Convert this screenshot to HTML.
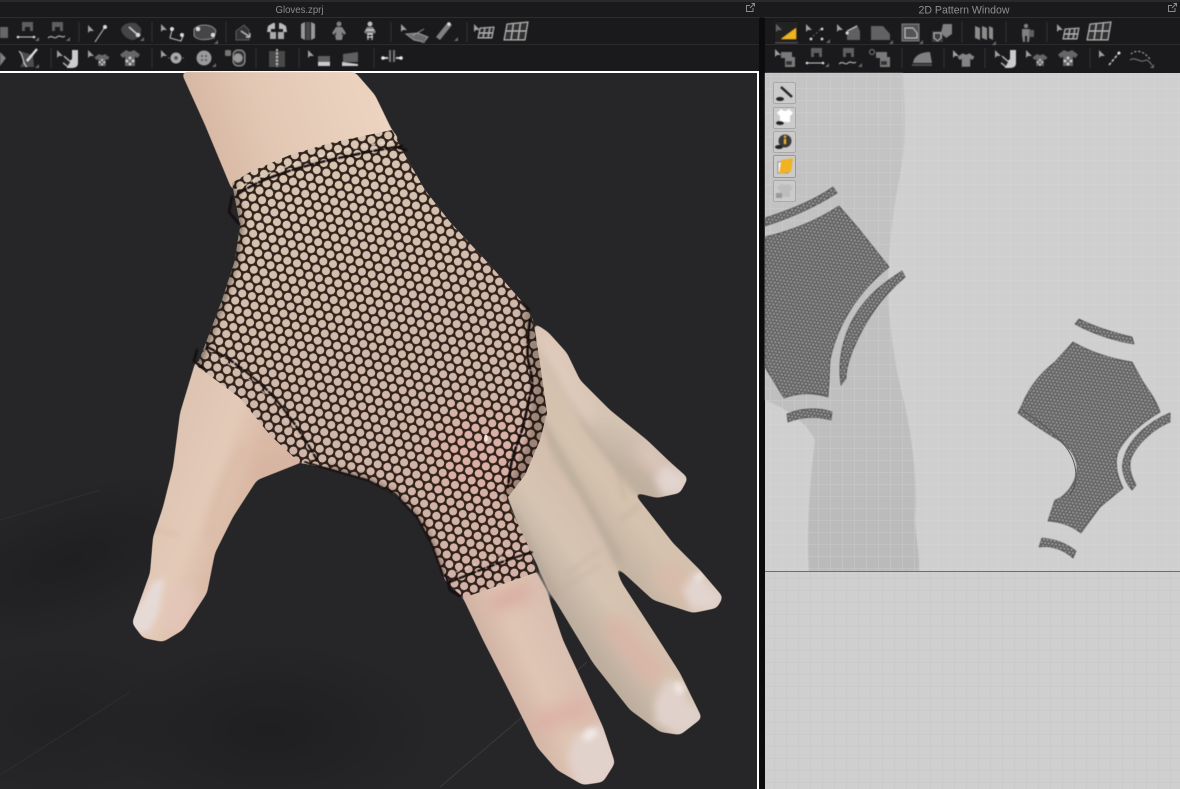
<!DOCTYPE html>
<html><head><meta charset="utf-8"><style>
html,body{margin:0;padding:0;background:#1a1a1c;width:1180px;height:789px;overflow:hidden}
svg{display:block}
text{font-family:"Liberation Sans",sans-serif}
</style></head><body>
<svg width="1180" height="789" viewBox="0 0 1180 789" xmlns="http://www.w3.org/2000/svg">
<defs>
<pattern id="net" width="10" height="17.32" patternUnits="userSpaceOnUse" patternTransform="rotate(15)">
<path fill-rule="evenodd" fill="#33241c" d="M0 0H10V17.32H0Z M.95 4.33a4.05 4.05 0 1 0 8.1 0a4.05 4.05 0 1 0-8.1 0Z M-4.05 12.99a4.05 4.05 0 1 0 8.1 0a4.05 4.05 0 1 0-8.1 0Z M5.95 12.99a4.05 4.05 0 1 0 8.1 0a4.05 4.05 0 1 0-8.1 0Z"/>
</pattern>
<pattern id="pm" width="3.6" height="6.2" patternUnits="userSpaceOnUse" patternTransform="rotate(8)">
<rect width="3.6" height="6.2" fill="#565656"/><circle cx="1.8" cy="1.55" r="1.15" fill="#9a9a9a"/><circle cx="0" cy="4.65" r="1.15" fill="#9a9a9a"/><circle cx="3.6" cy="4.65" r="1.15" fill="#9a9a9a"/>
</pattern>
<pattern id="grid" width="12" height="12" patternUnits="userSpaceOnUse" x="2" y="4">
<path d="M0 0V12M0 0H12" stroke="#dcdcdc" stroke-width="1" fill="none" opacity=".45"/>
</pattern>
<pattern id="grid2" width="12" height="12" patternUnits="userSpaceOnUse" x="6" y="2">
<path d="M0 0V12M0 0H12" stroke="#bcbcbc" stroke-width="1" fill="none" opacity=".6"/>
</pattern>
<filter id="sm" filterUnits="userSpaceOnUse" x="0" y="0" width="1180" height="789">
<feGaussianBlur stdDeviation="3"/>
<feComponentTransfer><feFuncA type="linear" slope="7" intercept="-3"/></feComponentTransfer>
</filter>
<filter id="b3" filterUnits="userSpaceOnUse" x="0" y="0" width="1180" height="789"><feGaussianBlur stdDeviation="3"/></filter>
<filter id="b6" filterUnits="userSpaceOnUse" x="0" y="0" width="1180" height="789"><feGaussianBlur stdDeviation="7"/></filter>
<filter id="b12" filterUnits="userSpaceOnUse" x="0" y="0" width="1180" height="789"><feGaussianBlur stdDeviation="14"/></filter>
<filter id="b05" filterUnits="userSpaceOnUse" x="0" y="0" width="1180" height="789"><feGaussianBlur stdDeviation=".45"/></filter>
<filter id="b02" filterUnits="userSpaceOnUse" x="0" y="0" width="1180" height="789"><feGaussianBlur stdDeviation=".25"/></filter>

<clipPath id="cf4"><path id="f4" d="M533 322L548 332L567 353L580 380L610 410L647 440L670 462L688 478L680 493L657 498L633 492L613 470L575 420L545 380Z"/></clipPath>
<clipPath id="cf3"><path id="f3" d="M535 340L560 380L583 427L613 467L637 497L673 543L700 570L723 597L717 608L693 613L653 600L617 567L590 530L540 450Z"/></clipPath>
<clipPath id="cf2"><path id="f2" d="M540 420L553 460L580 497L603 540L622 583L657 637L680 673L702 718L680 735L660 732L630 710L593 663L553 597L520 530L505 490Z"/></clipPath>
<clipPath id="cf1"><path id="f1" d="M455 590L535 570L547 593L563 640L583 683L603 727L615 763L603 782L583 785L557 770L537 747L507 687L483 640L463 598Z"/></clipPath>
<clipPath id="cth"><path id="th" d="M196 360L180 413L173 467L163 507L153 537L150 573L132 623L143 638L163 642L183 630L207 593L215 553L233 517L257 480L300 463L320 450L250 380Z"/></clipPath>
<clipPath id="car"><path id="ar" d="M181 72L205 125L232 190L400 140L392 130L375 95L355 72Z"/></clipPath>
<clipPath id="cgl"><path id="gl" d="M232 183L250 172L290 155L330 143L392 130L402 150L425 190L450 222L490 265L525 305L533 320L540 363L547 413L540 440L525 475L508 497L510 507L530 550L537 572L463 598L445 580L432 545L417 517L395 495L367 480L327 468L300 463L270 435L240 398L197 366L205 345L222 300L235 260L240 225Z"/></clipPath>

<linearGradient id="gGlove" gradientUnits="userSpaceOnUse" x1="300" y1="150" x2="470" y2="560">
<stop offset="0" stop-color="#d8c6b2"/><stop offset=".5" stop-color="#cfb8aa"/><stop offset="1" stop-color="#d2b2a6"/>
</linearGradient>
<linearGradient id="gF1" gradientUnits="userSpaceOnUse" x1="505" y1="700" x2="575" y2="668">
<stop offset="0" stop-color="#cfb0a2"/><stop offset=".5" stop-color="#e0c6b4"/><stop offset="1" stop-color="#d9bfb0"/>
</linearGradient>
<linearGradient id="gF2" gradientUnits="userSpaceOnUse" x1="568" y1="620" x2="632" y2="574">
<stop offset="0" stop-color="#bdad9e"/><stop offset=".55" stop-color="#d6c5b2"/><stop offset="1" stop-color="#d4bead"/>
</linearGradient>
<linearGradient id="gF3" gradientUnits="userSpaceOnUse" x1="590" y1="540" x2="650" y2="490">
<stop offset="0" stop-color="#c2b0a0"/><stop offset=".6" stop-color="#d4c3ae"/><stop offset="1" stop-color="#d4c0ae"/>
</linearGradient>
<linearGradient id="gF4" gradientUnits="userSpaceOnUse" x1="600" y1="460" x2="625" y2="395">
<stop offset="0" stop-color="#c0b09f"/><stop offset=".6" stop-color="#d3c3b2"/><stop offset="1" stop-color="#dac5b5"/>
</linearGradient>
<linearGradient id="gAr" gradientUnits="userSpaceOnUse" x1="190" y1="150" x2="380" y2="90">
<stop offset="0" stop-color="#d4b3a0"/><stop offset=".4" stop-color="#e2c8b4"/><stop offset="1" stop-color="#ecd4c0"/>
</linearGradient>
<linearGradient id="gTh" gradientUnits="userSpaceOnUse" x1="160" y1="480" x2="240" y2="510">
<stop offset="0" stop-color="#dfc4b2"/><stop offset=".55" stop-color="#e3cab8"/><stop offset="1" stop-color="#d9b8a4"/>
</linearGradient>
<linearGradient id="gSil" x1="0" y1="0" x2="0" y2="1">
<stop offset="0" stop-color="#c4c4c4"/><stop offset=".6" stop-color="#c0c0c0"/><stop offset="1" stop-color="#bababa"/>
</linearGradient>
<radialGradient id="dk"><stop offset="0" stop-color="#1d1d1f" stop-opacity=".8"/><stop offset="1" stop-color="#1d1d1f" stop-opacity="0"/></radialGradient>

<g id="ar0"><path d="M0 0L0 8L2 6L6 6Z" fill="#a0a0a0"/></g>
<g id="cn"><path d="M0 4L4 0V4Z" fill="#6a6a6a"/></g>
<g id="sh"><path d="M-4 -8L-1 -6.5H1L4 -8L10 -3.5L7.5 0L5 -1.5V8H-5V-1.5L-7.5 0L-10 -3.5Z"/></g>
<g id="sm1"><path d="M-6 -8H5V-3H8V7H-2V-2H-6Z" fill="#7a7a7a"/><rect x="-1" y="1" width="6" height="4" fill="#333"/></g>
<g id="gr1"><path d="M-10 -7L11 -9L8 9L-13 9Z" fill="#333" stroke="#b8b8b8" stroke-width="1.100"/><path d="M-3.5 -8L-6 9M3.5 -8.500L1 9M-11.500 0H9.500" stroke="#b8b8b8" stroke-width="1.100" fill="none"/></g>
<g id="gr2"><path d="M-7 -4L7 -5L5 6L-9 6Z" fill="#2c2c2c" stroke="#b8b8b8" stroke-width="1"/><path d="M-2 -4.500L-4 6M3 -4.800L1 6M-8 1H6" stroke="#b8b8b8" stroke-width="1" fill="none"/></g>
<g id="shd"><use href="#sh" fill="#666"/><g fill="#ccc"><circle cx="0" cy="0" r="1.400"/><circle cx="-3" cy="3" r="1.400"/><circle cx="3" cy="3" r="1.400"/><circle cx="0" cy="6" r="1.400"/></g></g>
<clipPath id="vp"><rect x="0" y="73" width="757" height="716"/></clipPath>
</defs>

<!-- base -->
<rect width="1180" height="789" fill="#1a1a1c"/>
<rect x="0" y="0" width="1180" height="2" fill="#2a2a2c"/>
<rect x="0" y="17" width="760" height="1" fill="#2d2d2f"/><rect x="764" y="17" width="416" height="1" fill="#2d2d2f"/>
<rect x="0" y="44" width="760" height="1" fill="#2b2b2d"/><rect x="764" y="44" width="416" height="1" fill="#2b2b2d"/>
<text x="275.500" y="13" font-size="10.500" fill="#8b8b8b" textLength="48" lengthAdjust="spacingAndGlyphs">Gloves.zprj</text>
<text x="918.500" y="13.500" font-size="11" fill="#8f8f8f" textLength="91" lengthAdjust="spacingAndGlyphs">2D Pattern Window</text>
<g fill="none" stroke="#8a8a8a" stroke-width="1"><path d="M750 5.500H746.500V11.500H753V8M750 8L754 4M751.500 3.500H754.500V6.500"/><path d="M1172 5.500H1168.500V11.500H1175V8M1172 8L1176 4M1173.500 3.500H1176.500V6.500"/></g>

<!-- left viewport -->
<rect x="0" y="71" width="759" height="718" fill="#fff"/>
<rect x="0" y="73" width="757" height="716" fill="#262628"/>
<rect x="759" y="18" width="6" height="771" fill="#0c0c0d"/>
<g clip-path="url(#vp)">
<ellipse cx="70" cy="560" rx="170" ry="70" fill="url(#dk)" transform="rotate(-20 70 560)"/>
<ellipse cx="270" cy="730" rx="170" ry="90" fill="url(#dk)"/>
<ellipse cx="60" cy="720" rx="130" ry="80" fill="url(#dk)" opacity=".6"/>
<path d="M587 662L440 787" stroke="#3a3a3c" stroke-width="1" fill="none"/>
<path d="M0 775L130 692M0 520L100 490" stroke="#2e2e30" stroke-width="1" fill="none"/>
</g>

<!-- fingers -->
<g filter="url(#sm)">
<use href="#f4" fill="url(#gF4)"/>
<g clip-path="url(#cf4)">
<path d="M545 335L560 370L590 420" stroke="#e0cbbc" stroke-width="16" fill="none" filter="url(#b6)"/>
<path d="M640 445L680 490" stroke="#dcc6bc" stroke-width="18" fill="none" filter="url(#b6)"/>
<path d="M560 395L615 475" stroke="#b3a494" stroke-width="6" fill="none" filter="url(#b3)"/>
<path d="M666 465L690 478L680 494L662 495L655 478Z" fill="#e2d4ce" filter="url(#b3)"/>
</g>
<use href="#f3" fill="url(#gF3)"/>
<g clip-path="url(#cf3)">
<path d="M540 420L580 490L620 560" stroke="#b7a898" stroke-width="6" fill="none" filter="url(#b3)"/>
<path d="M660 570L700 600" stroke="#d9bbaa" stroke-width="28" fill="none" filter="url(#b6)"/>
<path d="M617 470L625 500M640 505L620 520" stroke="#b09c8e" stroke-width="1.100" fill="none" filter="url(#b05)"/>
<path d="M695 572L725 598L715 610L692 610L682 590Z" fill="#e2d4ce" filter="url(#b3)"/>
<ellipse cx="699" cy="577" rx="3" ry="4" fill="#f3ece8"/>
</g>
<use href="#f2" fill="url(#gF2)"/>
<g clip-path="url(#cf2)">
<path d="M510 510L555 600" stroke="#b5a698" stroke-width="8" fill="none" filter="url(#b3)"/>
<path d="M610 620L660 680" stroke="#dab3a4" stroke-width="26" fill="none" filter="url(#b6)" opacity=".8"/>
<path d="M560 590L600 565M565 575L600 550" stroke="#b4a092" stroke-width="1" fill="none" filter="url(#b05)"/>
<path d="M668 678L704 718L682 737L655 722L655 700Z" fill="#e0d1cb" filter="url(#b3)"/>
<ellipse cx="679" cy="688" rx="4" ry="7" fill="#f2eae6" transform="rotate(-25 679 688)"/>
</g>
<use href="#f1" fill="url(#gF1)"/>
<g clip-path="url(#cf1)">
<path d="M490 605L530 590" stroke="#d9ada2" stroke-width="18" fill="none" filter="url(#b6)"/>
<path d="M535 725L590 705" stroke="#dcafa4" stroke-width="22" fill="none" filter="url(#b6)" opacity=".8"/>
<path d="M575 735L602 725L618 763L603 785L578 785L568 760Z" fill="#e2d2cc" filter="url(#b3)"/>
<ellipse cx="590" cy="734" rx="5" ry="8" fill="#f2eae6" transform="rotate(55 590 734)"/>
</g>
<use href="#th" fill="url(#gTh)"/>
<g clip-path="url(#cth)">
<path d="M300 460L255 472" stroke="#d8b2a2" stroke-width="16" fill="none" filter="url(#b6)"/>
<path d="M243 445L218 495L208 540" stroke="#d4b29c" stroke-width="5" fill="none" filter="url(#b3)" opacity=".55"/>
<path d="M190 590L170 630" stroke="#e4c6ba" stroke-width="24" fill="none" filter="url(#b6)"/>
<path d="M153 582L165 578L158 615L148 632L136 632L131 622Z" fill="#e6dad6" filter="url(#b05)"/>
<path d="M155 530L180 535" stroke="#cba994" stroke-width="1.200" fill="none"/>
</g>
<use href="#ar" fill="url(#gAr)"/>
</g>

<!-- glove -->
<g clip-path="url(#cgl)">
<rect x="190" y="120" width="370" height="490" fill="url(#gGlove)"/>
<ellipse cx="480" cy="455" rx="50" ry="45" fill="#dcaea4" filter="url(#b12)" opacity=".8"/>
<rect x="190" y="120" width="370" height="490" fill="url(#net)" filter="url(#b02)"/>
<path d="M232 183L240 225L235 260L222 300L205 345L197 366" stroke="#1d1410" stroke-width="7" fill="none" opacity=".45" filter="url(#b3)"/>
<path d="M530 310L541 380L536 440L510 500" stroke="#1d1410" stroke-width="16" fill="none" opacity=".3" filter="url(#b3)"/>
<path d="M445 580L432 545L417 517L395 495L367 480L327 468" stroke="#1d1410" stroke-width="6" fill="none" opacity=".4" filter="url(#b3)"/>
<ellipse cx="486" cy="438" rx="1.800" ry="3.500" fill="#f3e8e2"/>
</g>
<!-- seams -->
<g fill="none" stroke-linecap="round" filter="url(#b05)">
<path d="M238 194C270 172 330 158 402 146" stroke="#15100c" stroke-width="2.400" stroke-dasharray="9 3"/>
<path d="M236 190C270 168 330 151 394 141" stroke="#e8dcd0" stroke-width="1.500" stroke-dasharray="3 6"/>
<path d="M207 347C225 355 248 372 267 390C285 408 305 438 317 460" stroke="#15100c" stroke-width="2.200" stroke-dasharray="8 3"/>
<path d="M204 350C222 358 246 375 264 393C280 410 298 438 311 460" stroke="#d8c8bc" stroke-width="1.200" stroke-dasharray="3 6"/>
<path d="M530 320C528 335 527 350 528 360C531 372 533 380 532 387C528 402 526 415 523 427C518 442 514 452 512 460C510 470 509 478 508 487" stroke="#15100c" stroke-width="2.600" stroke-dasharray="10 3"/>
<path d="M450 582C480 570 505 560 533 552" stroke="#15100c" stroke-width="2.200" stroke-dasharray="7 3"/>
<path d="M448 575C477 564 505 552 530 546" stroke="#e0d0c4" stroke-width="1.100" stroke-dasharray="3 6"/>
<path d="M446 575L450 590L460 596M197 350L194 361L204 369M232 197L229 212L239 224M396 147L406 150M522 303L529 310" stroke="#141010" stroke-width="2.500"/>
<path d="M305 462L325 468L367 480L395 494L417 517L432 545L443 575" stroke="#141010" stroke-width="1.800"/>
</g>

<!-- right 2D window -->
<rect x="765" y="73" width="415" height="716" fill="#cfcfcf"/>
<path d="M765 73H903C905 110 907 140 900 175C895 200 890 230 888 280C888 320 895 370 905 405C912 440 918 480 915 520C916 540 920 555 919 571H809C806 530 811 470 815 440C808 425 790 410 765 400Z" fill="url(#gSil)" filter="url(#b05)"/>
<rect x="765" y="73" width="415" height="498" fill="url(#grid)"/>
<rect x="765" y="572" width="415" height="217" fill="url(#grid2)"/>
<rect x="765" y="571" width="415" height="1" fill="#6e6e6e"/>

<!-- pattern pieces -->
<g stroke="#333" stroke-width=".6" fill="url(#pm)" filter="url(#b05)">
<path d="M765 218C790 210 815 200 833 187L837 193C815 207 790 218 765 226Z"/>
<path d="M765 237C790 231 815 222 839 206L858 228L889 267C860 290 838 322 830 360L829 382L828 397C812 392 797 393 784 398L773 380L765 367Z"/>
<path d="M902 271L905 277C880 298 865 322 855 345C848 360 846 372 846 378L841 385C838 365 841 345 850 325C862 300 880 285 902 271Z"/>
<path d="M787 414L788 422C803 416 817 416 831 420L832 412C817 407 802 408 787 414Z"/>
<path d="M1075 324L1079 319C1095 327 1115 333 1132 337L1134 344C1115 341 1093 334 1075 324Z"/>
<path d="M1073 342C1090 352 1112 359 1132 362L1143 382C1150 392 1157 402 1160 412C1140 424 1125 438 1118 452C1114 464 1118 478 1123 488L1100 507L1081 533C1072 526 1062 522 1048 521L1055 500C1065 497 1075 485 1077 470C1078 458 1070 448 1060 441C1045 432 1030 422 1018 413L1022 405C1030 385 1042 372 1055 362Z"/>
<path d="M1170 413L1170 422C1155 428 1138 442 1131 458C1128 468 1132 478 1136 485L1132 490C1125 482 1121 470 1123 462C1127 440 1148 422 1170 413Z"/>
<path d="M1042 538L1039 547C1052 545 1064 550 1073 558L1076 551C1066 543 1054 539 1042 538Z"/>
</g>
<path d="M1022 410C1045 425 1060 438 1068 450C1076 462 1080 480 1070 495" stroke="#555" stroke-width="1" fill="none"/>

<!-- left tools in 2D -->
<g stroke="#a9a9a9" fill="#cbcbcb"><rect x="773.500" y="82.500" width="22" height="21" rx="1.500"/><rect x="773.500" y="107.500" width="22" height="21" rx="1.500"/><rect x="773.500" y="131.500" width="22" height="21" rx="1.500"/><rect x="773.500" y="155.500" width="22" height="22" rx="1.500" stroke="#999"/><rect x="773.500" y="180.500" width="22" height="21" rx="1.500"/></g>
<g filter="url(#b05)">
<path d="M781 87L792 97" stroke="#222" stroke-width="2.500"/><ellipse cx="780" cy="99" rx="4" ry="2" fill="#222"/>
<path d="M781 109L784 111H786L789 109L793 113L790 116V122H780V116L777 113Z" fill="#fff"/><ellipse cx="780" cy="123" rx="4" ry="2" fill="#222"/>
<circle cx="785" cy="141" r="6.500" fill="#3a3a3a"/><rect x="784" y="139" width="2" height="5" fill="#e8b028"/><circle cx="785" cy="136.800" r="1.200" fill="#e8b028"/><ellipse cx="779" cy="147" rx="4" ry="2" fill="#222"/>
<path d="M778 162H788V173H778Z" fill="#fff" stroke="#888"/><path d="M781 160L793 158L791 172L779 174Z" fill="#f0b322"/>
<path d="M781 184L784 185H786L789 184L793 188L790 191V197H780V191L777 188Z" fill="#bdbdbd"/><rect x="776" y="193" width="6" height="5" fill="#999"/>
</g>

<!-- toolbars -->
<g filter="url(#b05)">
<g stroke="#303032" stroke-width="1">
<path d="M79 22V42M152 22V42M226 22V42M391 22V42M467 22V42M51 48V68M152 48V68M256 48V68M299 48V68M374 48V68M962 22V42M1006 22V42M1047 22V42M902 48V68M944 48V68M985 48V68M1090 48V68"/>
</g>
<!-- row 1 left -->
<path d="M0 27H8V38H0Z" fill="#666"/>
<g transform="translate(27 31)"><path d="M-5 -9H6V0H3V-4H-2V0H-5Z" fill="#5e5e5e"/><path d="M-9 6H7" stroke="#ccc" stroke-width="1" /><circle cx="-9" cy="6" r="1.300" fill="#ddd"/><circle cx="7" cy="6" r="1.300" fill="#ddd"/><use href="#cn" x="8" y="6"/></g>
<g transform="translate(57 31)"><path d="M-5 -9H6V0H3V-4H-2V0H-5Z" fill="#5e5e5e"/><path d="M-9 7C-5 3 -3 9 0 6C3 3 5 8 8 5" stroke="#bbb" stroke-width="1.100" fill="none"/><use href="#cn" x="9" y="6"/></g>
<use href="#ar0" x="88" y="25"/><path d="M95 42L105 27" stroke="#bbb" stroke-width="1.100"/><circle cx="105" cy="27" r="2" fill="#ddd"/>
<g transform="translate(131 31)"><path d="M-10 -2C-8 -8 0 -9 5 -8L10 -3V5L3 9C-3 9 -9 5 -10 -2Z" fill="#444"/><path d="M-2 -4L7 4" stroke="#ccc" stroke-width="1.300"/><circle cx="7" cy="4" r="2" fill="#ddd"/><use href="#cn" x="9" y="6"/></g>
<use href="#ar0" x="161" y="24"/><path d="M172 30L170 38L181 41L183 36" stroke="#bbb" stroke-width="1.100" fill="none"/><circle cx="172" cy="29" r="2" fill="#ddd"/><circle cx="182" cy="35" r="2" fill="#ddd"/>
<g transform="translate(205 32)"><path d="M-11 -3C-5 -9 8 -8 11 -1L9 6C2 8 -7 9 -11 4Z" fill="#444" stroke="#888"/><circle cx="-7" cy="-3" r="2" fill="#ddd"/><circle cx="8" cy="3" r="2" fill="#ddd"/><use href="#cn" x="9" y="8"/></g>
<g transform="translate(244 33)"><path d="M-8 -2L0 -8L5 -3V7H-8Z" fill="#333" stroke="#5a5a5a"/><path d="M-3 -2L6 4M2 4H6V0" stroke="#bbb" stroke-width="1.200" fill="none"/></g>
<g transform="translate(277 31)"><path d="M-4 -8L-9 -5L-10 1H-6V-2L-2 -2V-8ZM4 -8L9 -5L10 1H6V-2L2 -2V-8Z" fill="#bbb"/><path d="M-7 1H-1V8H-7ZM1 1H7V8H1Z" fill="#aaa"/></g>
<g transform="translate(308 31)"><path d="M-7 -7L-3 -9V9L-7 7ZM7 -7L3 -9V9L7 7Z" fill="#999"/><path d="M-2 -9H2V9H-2Z" fill="#4a4a4a"/></g>
<g transform="translate(339 31)"><circle cy="-7" r="2.500" fill="#808080"/><path d="M-3 -4H3L7 2L5 4L3 1V4H4L3 9H-3L-4 4H-3V1L-5 4L-7 2Z" fill="#848484"/></g>
<g transform="translate(370 31)"><circle cy="-7" r="2.500" fill="#bbb"/><path d="M-3 -4H3L6 1L4 3L3 1V9H1V4H-1V9H-3V1L-4 3L-6 1Z" fill="#848484"/><path d="M-4 -1H4M-3 3H3M-3 6H3" stroke="#ddd"/></g>
<use href="#ar0" x="401" y="24"/><path d="M412 36L424 29M406 34L414 40L424 42L428 37L418 33Z" stroke="#999" fill="#6a6a6a"/><use href="#cn" x="421" y="39"/>
<g transform="translate(445 31)"><path d="M-9 6L3 -9L7 -6L-5 9Z" fill="#808080"/><circle cx="4" cy="-7" r="1.700" fill="#ddd"/><use href="#cn" x="9" y="6"/></g>
<use href="#ar0" x="474" y="24"/><use href="#gr2" x="487" y="32"/>
<use href="#gr1" x="517" y="31"/>
<!-- row 2 left -->
<path d="M0 52L6 58L0 66Z" fill="#808080"/>
<g transform="translate(27 58)"><path d="M-8 -7L6 -3L7 9H-7L-3 2Z" fill="#4e4e4e"/><path d="M-8 -7C-3 -2 -5 5 0 9" stroke="#ccc" fill="none"/><path d="M0 3L10 -9" stroke="#ddd" stroke-width="2.300"/><use href="#cn" x="8" y="6"/></g>
<use href="#ar0" x="57" y="50"/><g transform="translate(71 59)"><path d="M1 -9H7V4C7 8 4 9 0 9H-4V4L1 0Z" fill="#ccc"/><path d="M-7 -3L0 3L-3 8L-8 4" stroke="#ccc" fill="#222"/></g>
<use href="#ar0" x="88" y="50"/><g transform="translate(102 60)"><use href="#shd" transform="scale(.75)"/></g>
<use href="#shd" x="130" y="58"/>
<use href="#ar0" x="161" y="50"/><circle cx="176" cy="58" r="5.500" fill="#aaa"/><circle cx="176" cy="58" r="2" fill="#555"/><path d="M168 58H170M182 58H184" stroke="#666"/>
<circle cx="204" cy="58" r="7.500" fill="#9a9a9a"/><g fill="#444"><circle cx="202" cy="56" r="1"/><circle cx="206" cy="56" r="1"/><circle cx="202" cy="60" r="1"/><circle cx="206" cy="60" r="1"/></g><use href="#cn" x="212" y="63"/>
<rect x="225" y="50" width="6" height="6" rx="1" fill="#777"/><rect x="233" y="50" width="12" height="16" rx="5" fill="#363636" stroke="#999"/><circle cx="238" cy="58" r="4.500" fill="#999"/>
<g transform="translate(277 58)"><path d="M-8 -7H8V9H-8Z" fill="#484848"/><path d="M0 -9V9" stroke="#bbb" stroke-width="2" stroke-dasharray="2 1.500"/></g>
<use href="#ar0" x="308" y="50"/><path d="M318 56H330V63H318Z" fill="#5e5e5e"/><path d="M318 62H330V66H318Z" fill="#ccc"/>
<path d="M343 54L358 52V62H343Z" fill="#5e5e5e"/><path d="M342 62L358 64V66H342Z" fill="#ccc"/>
<g transform="translate(392 58)"><path d="M-2 -8V4M2 -8V4" stroke="#777" stroke-width="2"/><path d="M-10 0H-4M4 0H10" stroke="#ccc" stroke-width="2"/><circle cx="-9" r="1.800" fill="#eee"/><circle cx="9" r="1.800" fill="#eee"/></g>
<!-- row 1 right -->
<rect x="775" y="22" width="23" height="21" fill="#202022"/><path d="M775 43H798" stroke="#555"/>
<use href="#ar0" x="776" y="24" opacity=".5"/><path d="M781 39L796 28V39Z" fill="#eeb51e"/>
<use href="#ar0" x="806" y="24"/><path d="M810 39L822 28" stroke="#666" stroke-dasharray="2 2"/><circle cx="811" cy="39" r="1.400" fill="#ddd"/><circle cx="822" cy="29" r="1.400" fill="#ddd"/><circle cx="822" cy="39" r="1.400" fill="#ddd"/><use href="#cn" x="826" y="39"/>
<use href="#ar0" x="837" y="24"/><path d="M847 31L857 25L860 31V40H847Z" fill="#606060"/><path d="M847 31L857 26" stroke="#ccc"/><circle cx="847" cy="33" r="1.500" fill="#ddd"/>
<path d="M871 26H883L890 34V40H871Z" fill="#626262"/><use href="#cn" x="889" y="40"/>
<rect x="902" y="24" width="17" height="17" fill="#525252" stroke="#808080"/><path d="M905 28H913L917 33V38H905Z" fill="none" stroke="#bbb"/><use href="#cn" x="919" y="40"/>
<rect x="932" y="31" width="11" height="11" fill="#3e3e3e"/><path d="M934 33H941V38L937.500 41L934 38Z" fill="none" stroke="#aaa"/><path d="M943 24H952V34L946 38L941 33Z" fill="#808080"/>
<g fill="#8c8c8c"><path d="M975 26L980 28V40L975 38ZM982 26L987 28V40L982 38ZM989 26L993 28V40L989 38Z"/></g><use href="#cn" x="992" y="41"/>
<g transform="translate(1027 33)"><circle cx="-1" cy="-7" r="2.200" fill="#808080"/><path d="M-5 -4H3V2L2 9H0V3H-2V9H-4L-5 2Z" fill="#808080"/><path d="M2 -3H7V4H2Z" fill="#5e5e5e"/></g>
<use href="#ar0" x="1057" y="24"/><use href="#gr2" x="1072" y="33"/>
<use href="#gr1" x="1100" y="31"/>
<!-- row 2 right -->
<use href="#ar0" x="775" y="49"/><use href="#sm1" x="787" y="60"/>
<g transform="translate(816 57)"><path d="M-5 -9H6V0H3V-4H-2V0H-5Z" fill="#5e5e5e"/><path d="M-9 6H7" stroke="#ccc"/><circle cx="-9" cy="6" r="1.300" fill="#ddd"/><circle cx="7" cy="6" r="1.300" fill="#ddd"/><use href="#cn" x="9" y="6"/></g>
<g transform="translate(848 57)"><path d="M-5 -9H6V0H3V-4H-2V0H-5Z" fill="#5e5e5e"/><path d="M-9 7C-5 3 -3 9 0 6C3 3 5 8 8 5" stroke="#bbb" stroke-width="1.100" fill="none"/><use href="#cn" x="10" y="6"/></g>
<circle cx="872" cy="52" r="2.500" fill="none" stroke="#808080"/><use href="#sm1" x="882" y="60"/>
<path d="M913 63C914 55 922 52 930 52L932 63Z" fill="#808080"/><path d="M912 65H932" stroke="#4e4e4e" stroke-width="2"/>
<use href="#ar0" x="953" y="50"/><g transform="translate(966 60)"><use href="#sh" fill="#848484" transform="scale(.85)"/></g>
<use href="#ar0" x="995" y="50"/><g transform="translate(1009 59)"><path d="M1 -9H7V4C7 8 4 9 0 9H-4V4L1 0Z" fill="#ccc"/><path d="M-7 -3L0 3L-3 8L-8 4" stroke="#ccc" fill="#222"/></g>
<use href="#ar0" x="1026" y="50"/><g transform="translate(1040 60)"><use href="#shd" transform="scale(.75)"/></g>
<use href="#shd" x="1068" y="58"/>
<use href="#ar0" x="1099" y="50"/><path d="M1109 65L1119 53" stroke="#ccc" stroke-width="1.500" stroke-dasharray="3 1.500"/><circle cx="1119" cy="53" r="1.500" fill="#ddd"/>
<path d="M1131 54C1136 49 1144 52 1147 56L1150 59" stroke="#ccc" stroke-dasharray="2 2" fill="none"/><path d="M1130 60C1136 56 1140 64 1146 60C1149 60 1150 63 1152 65" stroke="#808080" fill="none"/><use href="#cn" x="1150" y="64"/>
</g>
</svg>
</body></html>
